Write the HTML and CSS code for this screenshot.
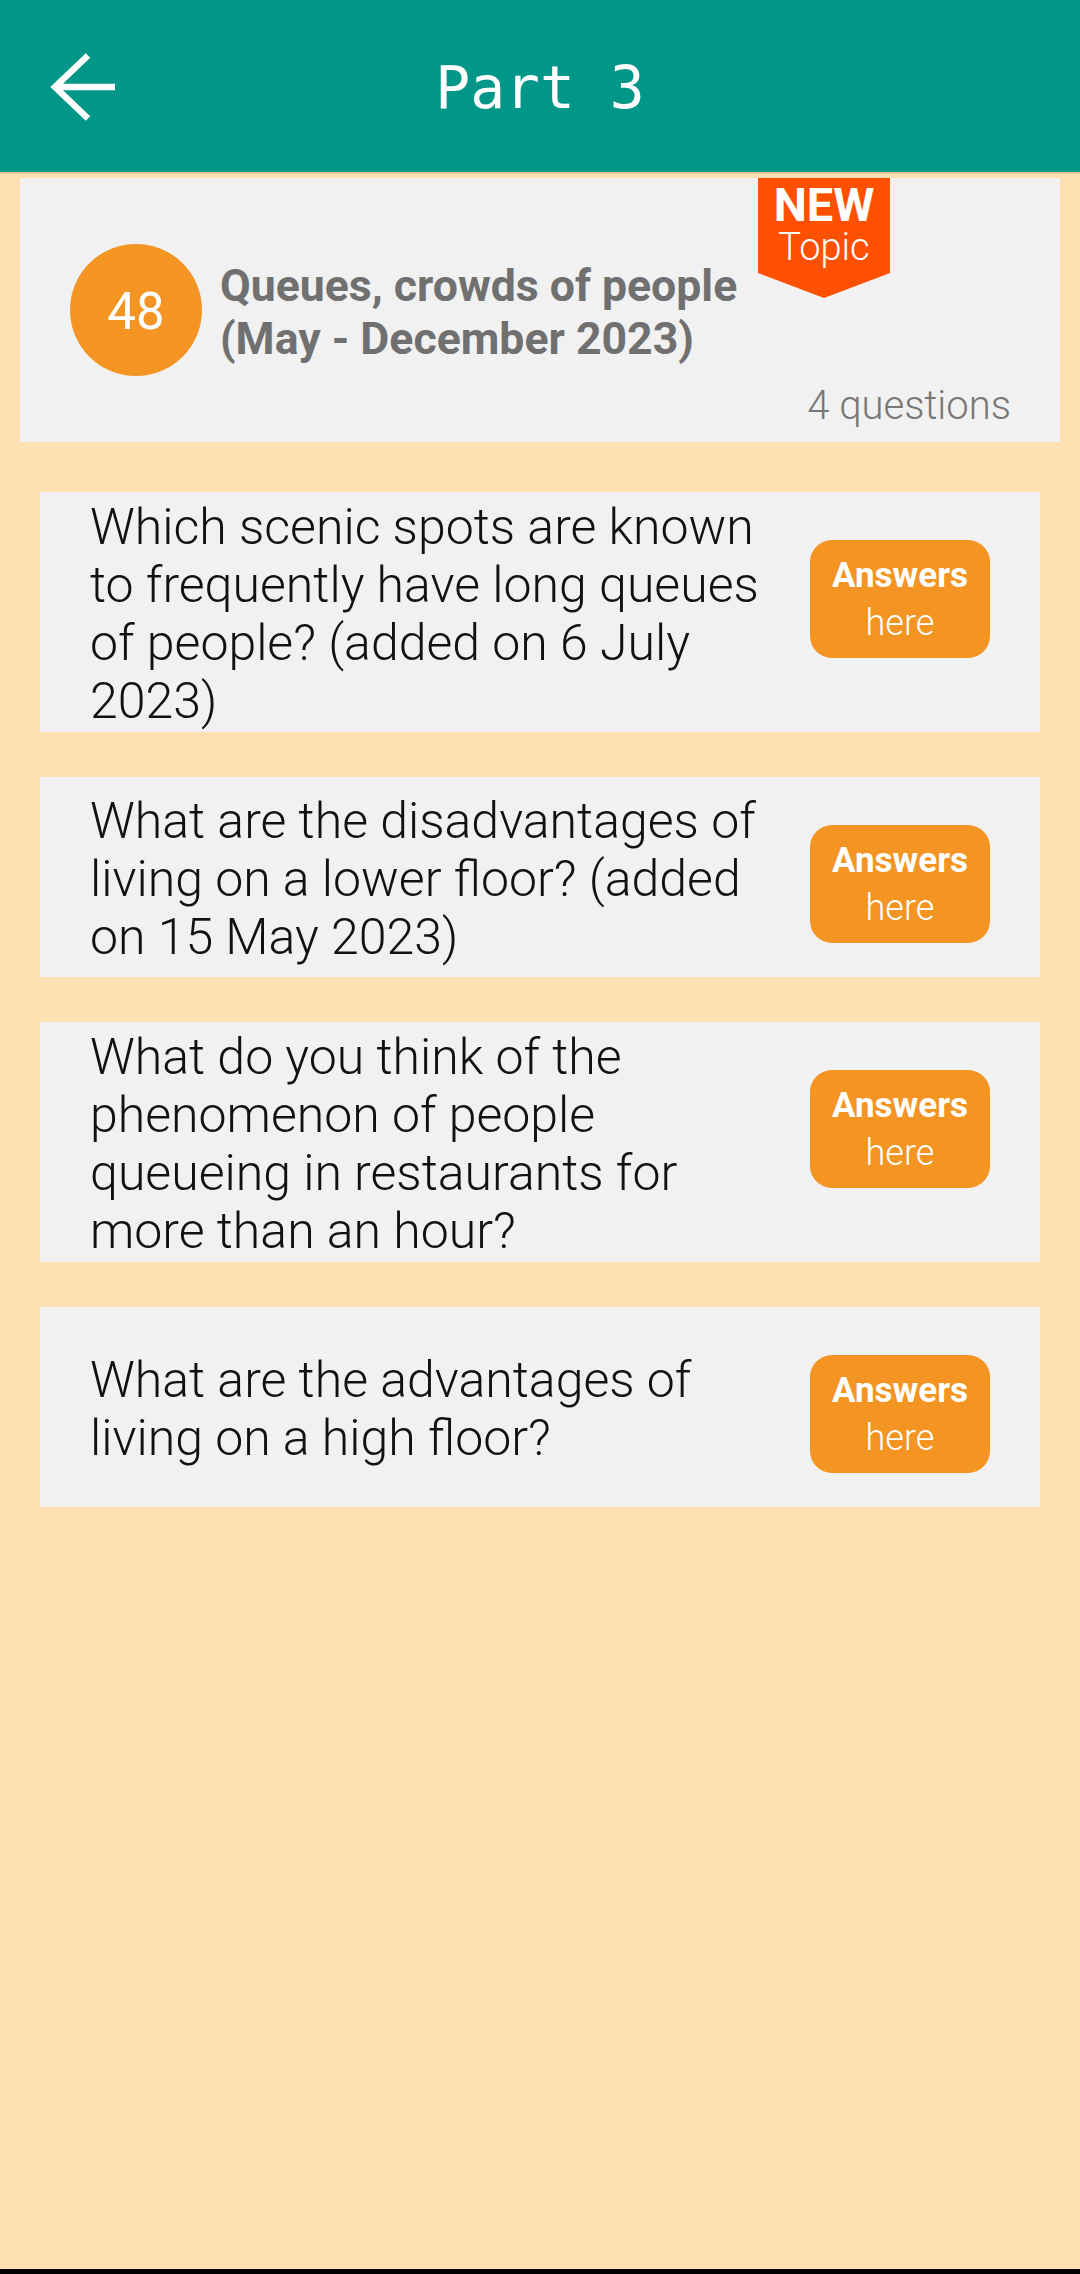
FILE: index.html
```html
<!DOCTYPE html>
<html lang="en">
<head>
<meta charset="utf-8">
<title>Part 3</title>
<link rel="stylesheet" href="styles.css">
</head>
<body>
<div class="app">
  <header class="topbar">
    <div class="back">
      <svg class="back-icon" width="70" height="70" viewBox="0 0 70 70" aria-hidden="true">
        <path d="M39 3.5 L6 35 L39 66.5 M6 35 H66" fill="none" stroke="#ffffff" stroke-width="6.5" stroke-linejoin="miter"/>
      </svg>
    </div>
    <h1 class="title">Part 3</h1>
    <div></div>
  </header>

  <main class="content">
    <section class="topic-card">
      <div class="topic-row">
        <div class="topic-num">48</div>
        <div class="topic-title">Queues, crowds of people (May - December 2023)</div>
      </div>
      <div class="topic-count">4 questions</div>
      <div class="badge">
        <span class="badge-new">NEW</span>
        <span class="badge-topic">Topic</span>
      </div>
    </section>

    <div class="questions">
      <div class="q-card">
        <p class="q-text">Which scenic spots are known to frequently have long queues of people? (added on 6 July 2023)</p>
        <div class="ans-btn"><span class="ans-main">Answers</span><span class="ans-sub">here</span></div>
      </div>
      <div class="q-card">
        <p class="q-text">What are the disadvantages of living on a lower floor? (added on 15 May 2023)</p>
        <div class="ans-btn"><span class="ans-main">Answers</span><span class="ans-sub">here</span></div>
      </div>
      <div class="q-card">
        <p class="q-text">What do you think of the phenomenon of people queueing in restaurants for more than an hour?</p>
        <div class="ans-btn"><span class="ans-main">Answers</span><span class="ans-sub">here</span></div>
      </div>
      <div class="q-card">
        <p class="q-text">What are the advantages of living on a high floor?</p>
        <div class="ans-btn"><span class="ans-main">Answers</span><span class="ans-sub">here</span></div>
      </div>
    </div>
  </main>
  <div class="navbar-edge"></div>
</div>
</body>
</html>
```

FILE: styles.css
```css
* { box-sizing: border-box; }

html, body {
  margin: 0;
  padding: 0;
}

body {
  background: #FFE0B2;
  font-family: "Roboto", "Noto Sans", "Liberation Sans", sans-serif;
}

.app {
  height: 2274px;
  display: flex;
  flex-direction: column;
}

.topbar {
  height: 172px;
  flex: 0 0 172px;
  background: #009688;
  display: grid;
  grid-template-columns: 1fr auto 1fr;
  align-items: center;
  box-shadow: 0 1px 2px rgba(0, 0, 0, 0.25);
  position: relative;
  z-index: 1;
}

.back {
  padding-left: 49px;
  display: flex;
  align-items: center;
}

.back-icon {
  display: block;
  margin-top: 1px;
}

.title {
  margin: 0;
  font-family: "DejaVu Sans Mono", "Liberation Mono", monospace;
  font-weight: normal;
  font-size: 58px;
  color: #ffffff;
  line-height: 1;
  padding-top: 4px;
}

.content {
  flex: 1;
  padding: 6px 20px 0;
}

.topic-card {
  position: relative;
  background: #F1F1F1;
  height: 264px;
  padding: 66px 49px 0 50px;
  display: flex;
  flex-direction: column;
}

.topic-row {
  display: flex;
  align-items: center;
  gap: 18px;
}

.topic-num {
  width: 132px;
  height: 132px;
  flex: 0 0 132px;
  border-radius: 50%;
  background: #F39423;
  color: #ffffff;
  font-size: 51px;
  font-weight: 400;
  display: flex;
  align-items: center;
  justify-content: center;
  padding-top: 2px;
}

.topic-title {
  width: 548px;
  font-size: 44.6px;
  font-weight: 700;
  line-height: 53px;
  color: #707070;
  padding-top: 6px;
}

.topic-count {
  margin-top: 7px;
  align-self: flex-end;
  font-size: 40px;
  font-weight: 300;
  line-height: 46px;
  color: #777777;
}

.badge {
  position: absolute;
  top: 0;
  right: 170px;
  width: 132px;
  height: 120px;
  background: #FF4F00;
  clip-path: polygon(0 0, 100% 0, 100% 95px, 50% 120px, 0 95px);
  display: flex;
  flex-direction: column;
  align-items: center;
  padding-top: 4px;
  color: #ffffff;
}

.badge-new {
  font-size: 47px;
  font-weight: 700;
  line-height: 46px;
}

.badge-topic {
  font-size: 38px;
  font-weight: 300;
  line-height: 38px;
}

.questions {
  margin: 50px 20px 0;
  display: flex;
  flex-direction: column;
  gap: 45px;
}

.q-card {
  background: #F1F1F1;
  min-height: 200px;
  padding: 6px 50px 2px 50px;
  display: flex;
  align-items: flex-start;
  gap: 25px;
}

.q-text {
  flex: 1;
  margin: 0;
  align-self: center;
  font-size: 50px;
  font-weight: 300;
  line-height: 58px;
  color: #111111;
}

.ans-btn {
  flex: 0 0 180px;
  width: 180px;
  height: 118px;
  margin-top: 42px;
  border-radius: 22px;
  background: #F39423;
  color: #ffffff;
  display: flex;
  flex-direction: column;
  align-items: center;
  justify-content: center;
}

.ans-main {
  font-size: 35px;
  font-weight: 700;
  line-height: 47px;
}

.ans-sub {
  font-size: 36px;
  font-weight: 300;
  line-height: 47px;
  padding-top: 1px;
}

.navbar-edge {
  flex: 0 0 5px;
  height: 5px;
  background: #000000;
}
```
